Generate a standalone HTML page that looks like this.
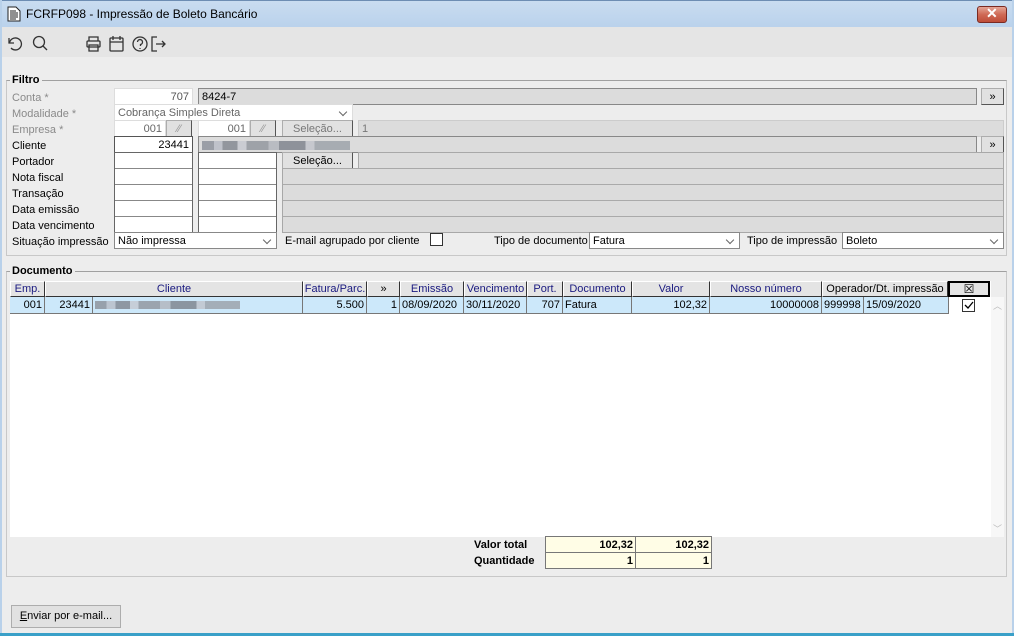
<!DOCTYPE html>
<html><head><meta charset="utf-8"><style>
*{box-sizing:border-box;margin:0;padding:0}
body{width:1014px;height:636px;overflow:hidden;background:#f0f0f0;font-family:"Liberation Sans",Arial,sans-serif;font-size:11px;color:#000;position:relative}
.a{position:absolute}
.win{left:0;top:0;width:1014px;height:636px;border:1px solid #6d8db3;background:#ededed}
.frame{left:0;top:0;width:1014px;height:636px;border:2px solid #b9d1ea;border-top:none;border-bottom:none;pointer-events:none}
.title{left:1px;top:1px;width:1012px;height:26px;background:linear-gradient(#c9dcf0,#bad2ec)}
.tb{left:2px;top:27px;width:1010px;height:30px;background:#e5e5e5}
.lbl{height:16px;line-height:18px;white-space:nowrap}
.g{color:#8a8a8a}
.in{height:17px;border:1px solid #a0a0a0;background:#fff;line-height:16px;padding:0 3px;white-space:nowrap;overflow:hidden}
.dis{background:#dcdcdc;border-color:#a8a8a8}
.btn{height:17px;border:1px solid #adadad;border-right-color:#555;border-bottom-color:#555;background:#e1e1e1;text-align:center;line-height:16px}
.grp{border:1px solid #c8c8c8;border-top-color:#a0a0a0}
.gt{font-weight:bold;background:#ededed;padding:0 2px;font-size:11px;line-height:14px}
.hd{top:281px;height:16px;border:1px solid #888;border-top-color:#fff;border-left-color:#fff;background:#e4e4e4;color:#1a1a80;text-align:center;line-height:15px;border-right-color:#333;border-bottom-color:#333}
.c{top:297px;height:17px;border-right:1px solid #777;border-bottom:1px solid #777;background:#cce8fa;line-height:17px;padding:0 2px;white-space:nowrap;overflow:hidden}
.r{text-align:right}
.blur{display:inline-block;height:9px;background:linear-gradient(90deg,#8a8f99 0 8%,#b8bcc5 8% 14%,#7f848d 14% 24%,#c5c8cf 24% 30%,#8f939b 30% 45%,#b0b4bb 45% 52%,#7b8089 52% 70%,#c0c3ca 70% 76%,#9aa0a8 76% 100%);opacity:.8;vertical-align:middle}
.y{background:#fffde6;border:1px solid #777;text-align:right;font-weight:bold;line-height:16px;padding:0 2px;height:17px}
.dd::after{content:"";position:absolute;right:6px;top:4px;width:5px;height:5px;border-right:1px solid #666;border-bottom:1px solid #666;transform:rotate(45deg)}
</style></head><body>
<div class="a win"></div>
<div class="a title"></div>
<svg class="a" style="left:7px;top:6px" width="14" height="16" viewBox="0 0 14 16"><path d="M1 1h8l4 4v10H1z" fill="#fff" stroke="#222"/><path d="M3 5h6M3 7h8M3 9h8M3 11h8M3 13h6" stroke="#222"/></svg>
<div class="a" style="left:26px;top:7px;font-size:12px">FCRFP098 - Impressão de Boleto Bancário</div>
<div class="a" style="left:977px;top:6px;width:30px;height:17px;border:1px solid #7a2a22;border-radius:3px;background:linear-gradient(#e4a597,#cf6a55 50%,#bf4d38)"></div>
<div class="a" style="left:986px;top:5px;color:#fff;font-weight:bold;font-size:14px">✕</div>
<div class="a tb"></div>
<svg class="a" style="left:6px;top:35px" width="160" height="18" viewBox="0 0 160 18" fill="none" stroke="#333" stroke-width="1.3">
<path d="M3 3v5h5"/><path d="M3.5 8A6 6 0 1 1 5 13"/>
<circle cx="33" cy="7" r="5.5"/><path d="M37 11l4 4"/>
<rect x="81" y="6" width="13" height="6" rx="1"/><path d="M83 6V2h9v4M83 10h9v6h-9z"/>
<rect x="104" y="3" width="13" height="13" rx="1"/><path d="M104 7h13M107 1v4M114 1v4"/>
<circle cx="134" cy="9" r="7"/><path d="M131.5 7a2.5 2.5 0 1 1 3 2.5v1.5M134 13v1"/>
<path d="M159 9h-9M156 6l3 3-3 3M151 2h-5v14h5"/></svg>

<div class="a grp" style="left:6px;top:80px;width:1001px;height:176px"></div>
<div class="a gt" style="left:10px;top:73px">Filtro</div>
<div class="a grp" style="left:6px;top:271px;width:1001px;height:306px"></div>
<div class="a gt" style="left:10px;top:264px">Documento</div>

<div class="a lbl g" style="left:12px;top:89px">Conta *</div>
<div class="a lbl g" style="left:12px;top:105px">Modalidade *</div>
<div class="a lbl g" style="left:12px;top:121px">Empresa *</div>
<div class="a lbl" style="left:12px;top:137px">Cliente</div>
<div class="a lbl" style="left:12px;top:153px">Portador</div>
<div class="a lbl" style="left:12px;top:169px">Nota fiscal</div>
<div class="a lbl" style="left:12px;top:185px">Transação</div>
<div class="a lbl" style="left:12px;top:201px">Data emissão</div>
<div class="a lbl" style="left:12px;top:217px">Data vencimento</div>
<div class="a lbl" style="left:12px;top:233px">Situação impressão</div>

<div class="a in r g" style="left:114px;top:88px;width:79px;border-color:#ddd;color:#555">707</div>
<div class="a in dis" style="left:198px;top:88px;width:779px;border-color:#888">8424-7</div>
<div class="a btn" style="left:981px;top:88px;width:23px">»</div>
<div class="a in dd" style="left:114px;top:104px;width:239px;border-color:#ddd;color:#666">Cobrança Simples Direta</div>
<div class="a in r" style="left:114px;top:120px;width:52px;border-color:#ddd;color:#666">001</div>
<div class="a btn" style="left:166px;top:120px;width:26px;color:#999">⁄⁄</div>
<div class="a in r" style="left:198px;top:120px;width:52px;border-color:#ddd;color:#666">001</div>
<div class="a btn" style="left:250px;top:120px;width:26px;color:#999">⁄⁄</div>
<div class="a btn" style="left:282px;top:120px;width:71px;color:#777">Seleção...</div>
<div class="a in dis" style="left:358px;top:120px;width:646px;color:#777;border-color:#ccc">1</div>
<div class="a in r" style="left:114px;top:136px;width:79px;border-color:#555">23441</div>
<div class="a in dis" style="left:198px;top:136px;width:779px;border-color:#888"><span class="blur" style="width:148px"></span></div>
<div class="a btn" style="left:981px;top:136px;width:23px">»</div>
<div class="a btn" style="left:282px;top:152px;width:71px">Seleção...</div>
<div class="a in dis" style="left:358px;top:152px;width:646px"></div>
<div class="a" style="left:114px;top:152px;width:79px;height:81px;border:1px solid #666;background:repeating-linear-gradient(#fff 0 15px,#888 15px 16px)"></div>
<div class="a" style="left:198px;top:152px;width:79px;height:81px;border:1px solid #666;background:repeating-linear-gradient(#fff 0 15px,#888 15px 16px)"></div>
<div class="a in dis" style="left:282px;top:168px;width:722px;height:65px;background:repeating-linear-gradient(#dcdcdc 0 15px,#aaa 15px 16px)"></div>
<div class="a in dd" style="left:114px;top:232px;width:163px;border-color:#888">Não impressa</div>
<div class="a lbl" style="left:285px;top:232px">E-mail agrupado por cliente</div>
<div class="a" style="left:430px;top:233px;width:13px;height:13px;border:1px solid #333;background:#fff"></div>
<div class="a lbl" style="left:494px;top:232px">Tipo de documento</div>
<div class="a in dd" style="left:589px;top:232px;width:151px;border-color:#888">Fatura</div>
<div class="a lbl" style="left:747px;top:232px">Tipo de impressão</div>
<div class="a in dd" style="left:842px;top:232px;width:162px;border-color:#888">Boleto</div>

<div class="a" style="left:10px;top:281px;width:981px;height:256px;background:#fff"></div>
<div class="a hd" style="left:10px;width:35px">Emp.</div>
<div class="a hd" style="left:45px;width:258px">Cliente</div>
<div class="a hd" style="left:303px;width:64px">Fatura/Parc.</div>
<div class="a hd" style="left:367px;width:33px;color:#000">»</div>
<div class="a hd" style="left:400px;width:64px">Emissão</div>
<div class="a hd" style="left:464px;width:63px">Vencimento</div>
<div class="a hd" style="left:527px;width:36px">Port.</div>
<div class="a hd" style="left:563px;width:69px">Documento</div>
<div class="a hd" style="left:632px;width:78px">Valor</div>
<div class="a hd" style="left:710px;width:112px">Nosso número</div>
<div class="a hd" style="left:822px;width:126px;color:#000">Operador/Dt. impressão</div>
<div class="a hd" style="left:948px;width:42px;border:2px solid #000;font-size:12px;color:#000;line-height:13px">☒</div>
<div class="a" style="left:10px;top:297px;width:939px;height:1px;background:#777"></div>
<div class="a c r" style="left:10px;width:35px">001</div>
<div class="a c r" style="left:45px;width:48px">23441</div>
<div class="a c" style="left:93px;width:210px"><span class="blur" style="width:145px;height:8px"></span></div>
<div class="a c r" style="left:303px;width:64px">5.500</div>
<div class="a c r" style="left:367px;width:33px">1</div>
<div class="a c" style="left:400px;width:64px">08/09/2020</div>
<div class="a c" style="left:464px;width:63px">30/11/2020</div>
<div class="a c r" style="left:527px;width:36px">707</div>
<div class="a c" style="left:563px;width:69px">Fatura</div>
<div class="a c r" style="left:632px;width:78px">102,32</div>
<div class="a c r" style="left:710px;width:112px">10000008</div>
<div class="a c" style="left:822px;width:42px">999998</div>
<div class="a c" style="left:864px;width:85px">15/09/2020</div>
<div class="a" style="left:962px;top:299px;width:13px;height:13px;border:1px solid #333;background:#fff"></div>
<svg class="a" style="left:963px;top:300px" width="11" height="11"><path d="M2 5l3 3 5-6" stroke="#000" fill="none" stroke-width="1.3"/></svg>
<div class="a" style="left:991px;top:297px;width:13px;height:240px;background:#f7f7f7"></div>
<div class="a" style="left:993px;top:299px;color:#bbb;font-size:9px">︿</div>
<div class="a" style="left:993px;top:522px;color:#bbb;font-size:9px">﹀</div>

<div class="a lbl" style="left:474px;top:536px;font-weight:bold">Valor total</div>
<div class="a lbl" style="left:474px;top:552px;font-weight:bold">Quantidade</div>
<div class="a y" style="left:545px;top:536px;width:91px">102,32</div>
<div class="a y" style="left:635px;top:536px;width:77px">102,32</div>
<div class="a y" style="left:545px;top:552px;width:91px">1</div>
<div class="a y" style="left:635px;top:552px;width:77px">1</div>

<div class="a" style="left:11px;top:605px;width:110px;height:23px;border:1px solid #adadad;background:#e1e1e1;text-align:center;line-height:21px"><u>E</u>nviar por e-mail...</div>
<div class="a frame"></div>
<div class="a" style="left:0;top:633px;width:1014px;height:3px;background:#3aa0c8"></div>
</body></html>
